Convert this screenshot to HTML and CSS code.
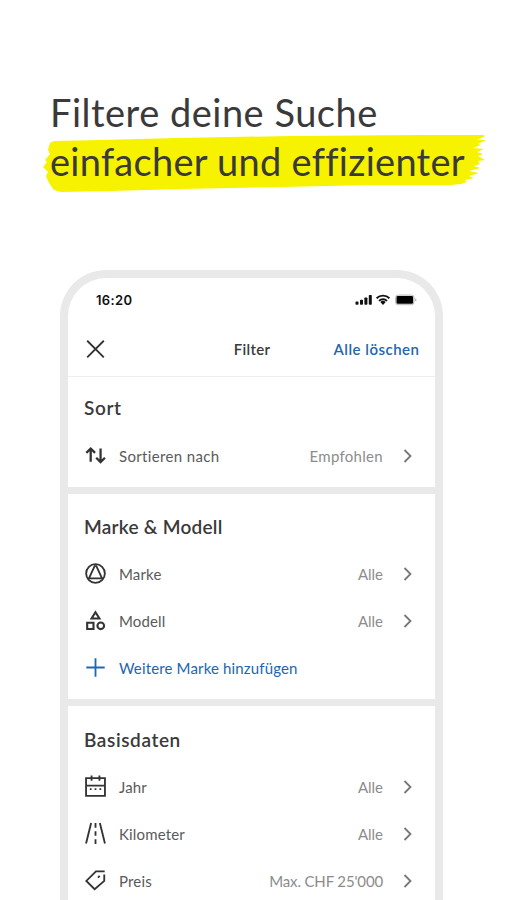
FILE: index.html
```html
<!DOCTYPE html>
<html lang="de">
<head>
<meta charset="utf-8">
<title>Filter</title>
<link rel="stylesheet" href="styles.css">
</head>
<body>
<h1 class="headline">
  <span class="line first">Filtere deine Suche</span>
  <span class="line second">
    <svg class="brush" width="447" height="60" viewBox="0 0 447 60"><path fill="#f6f200" d="M9 9 13 7 60 6 135 4 250 2 382 1 442 1 444 2 436 6 445 6 437 10 440 11 432 14 443 15 436 18 442 20 437 22 444 26 437 27 439 30 433 32 439 34 428 37 438 39 428 42 433 44 424 46 426 48 420 50 410 51 330 51 240 53 140 55 70 57 20 58 13 56 10 52 7 47 5 42 7 38 2 33 6 28 4 26 9 20 7 16Z"/></svg>
    <span class="label">einfacher und effizienter</span>
  </span>
</h1>
<main class="phone">
  <div class="status">
    <span class="time">16:20</span>
    <svg width="62" height="12" viewBox="0 0 62 12">
      <g fill="#111"><rect x="0.500" y="7.600" width="3" height="3.200" rx=".8"/><rect x="5" y="5.800" width="3" height="5" rx=".8"/><rect x="9.400" y="3.400" width="3" height="7.400" rx=".8"/><rect x="13.800" y="1" width="3" height="9.800" rx=".8"/><path d="m25.300 8.100 2.700 2.800 2.700-2.800a4 4 0 0 0-5.400 0Z"/></g>
      <path fill="none" stroke="#111" stroke-width="1.900" d="M21.600 4.200a9.300 9.300 0 0 1 12.800 0M24 6.900a5.800 5.800 0 0 1 8 0"/>
      <rect x="40.600" y="1.100" width="18.400" height="9.600" rx="2.600" fill="#fff" stroke="#b5b5b5"/><rect x="41.500" y="2.100" width="16.600" height="7.600" rx="1.300" fill="#000"/><path fill="#aaa" d="M60.200 4.500q1.300.4 1.300 1.400t-1.300 1.400Z"/>
    </svg>
  </div>
  <header class="bar">
    <svg class="icon" viewBox="0 0 24 24"><path d="m2.500 2 19 19m0-19-19 19"/></svg>
    <strong class="title">Filter</strong>
    <a class="clear">Alle löschen</a>
  </header>
  <section class="group sort">
    <h2>Sort</h2>
    <div class="row"><svg class="icon bold" viewBox="0 0 24 24"><path d="M6.500 19V4.500M1.500 9l5-5 5 5M17.800 4v15m-5-4.500 5 5 5-5"/></svg><span class="name">Sortieren nach</span><span class="value">Empfohlen</span><svg class="chev" viewBox="0 0 10 14"><path d="m1.500 1 6 6-6 6"/></svg></div>
  </section>
  <section class="group make">
    <h2>Marke &amp; Modell</h2>
    <div class="row"><svg class="icon" viewBox="0 0 24 24"><circle cx="12" cy="12" r="10.700"/><path d="M2.500 17.500h19M4.500 17.500 11 3.500h2l6.500 14"/></svg><span class="name">Marke</span><span class="value">Alle</span><svg class="chev" viewBox="0 0 10 14"><path d="m1.500 1 6 6-6 6"/></svg></div>
    <div class="row"><svg class="icon heavy" viewBox="0 0 24 24"><path d="m12 2.500 4.500 7.200h-9ZM2.500 14.500h7.200v7.200H2.500Z"/><circle cx="18" cy="18" r="3.800"/></svg><span class="name">Modell</span><span class="value">Alle</span><svg class="chev" viewBox="0 0 10 14"><path d="m1.500 1 6 6-6 6"/></svg></div>
    <div class="row add"><svg class="icon" viewBox="0 0 24 24"><path d="M12 1.500v21M1.500 12h21"/></svg><span class="name">Weitere Marke hinzufügen</span></div>
  </section>
  <section class="group basics">
    <h2>Basisdaten</h2>
    <div class="row"><svg class="icon" viewBox="0 0 24 24"><path d="M1.200 2.500h21.600v20.300H1.200ZM1.200 11h21.600M7.500-.5v6m9-6v6"/><path d="M5.500 15h2m3.500 0h2m3.500 0h2"/></svg><span class="name">Jahr</span><span class="value">Alle</span><svg class="chev" viewBox="0 0 10 14"><path d="m1.500 1 6 6-6 6"/></svg></div>
    <div class="row"><svg class="icon" viewBox="0 0 24 24"><path d="M7 0 1.200 23.500M17 0l5.800 23.500M12 0v5.500m0 4v5m0 4v5.500"/></svg><span class="name">Kilometer</span><span class="value">Alle</span><svg class="chev" viewBox="0 0 10 14"><path d="m1.500 1 6 6-6 6"/></svg></div>
    <div class="row"><svg class="icon" viewBox="0 0 24 24"><path d="M22.500 1.500H12.500L1.500 12.500l9.500 9.500L22 12.500V5"/><path d="m14.800 8.800 2-2"/></svg><span class="name">Preis</span><span class="value price">Max. CHF 25'000</span><svg class="chev" viewBox="0 0 10 14"><path d="m1.500 1 6 6-6 6"/></svg></div>
  </section>
</main>
</body>
</html>
```
FILE: styles.css
```css
* { box-sizing: border-box; }
html, body { margin: 0; }
body { height: 900px; overflow: hidden; background: #fff; color: #3a3a3a; font-family: Lato, "Liberation Sans", sans-serif; font-variant-ligatures: none; }
.headline { margin: 0; padding: 88px 0 0 50px; height: 270px; font-weight: 400; font-size: 38px; line-height: 49px; letter-spacing: .5px; white-space: nowrap; }
.line { display: block; position: relative; }
.second { letter-spacing: .27px; }
.label { position: relative; }
.brush { position: absolute; left: -9px; top: -3px; }
.phone { width: 383px; height: 630px; margin-left: 60px; border: 8px solid #e9e9e9; border-bottom: 0; border-radius: 46px 46px 0 0; overflow: hidden; }
.status { height: 44px; padding: 0 18px 0 28px; display: flex; align-items: center; justify-content: space-between; font: 600 13px Inter, sans-serif; color: #111; }
.time { letter-spacing: .35px; }
.bar { height: 55px; padding: 0 16px 0 17px; display: grid; grid-template-columns: 1fr auto 1fr; align-items: center; border-bottom: 1px solid #eee; font-size: 15px; }
.title { font-weight: 600; letter-spacing: .3px; }
.clear { justify-self: end; color: #2166b0; font-weight: 600; letter-spacing: .5px; margin-right: -.5px; }
.icon { width: 21px; height: 21px; fill: none; stroke: #333; stroke-width: 2.1; flex: none; overflow: visible; }
.bold { stroke-width: 2.6; }
.heavy { stroke-width: 2.4; }
.group { padding-bottom: 8px; border-bottom: 7px solid #e9e9e9; }
.group h2 { margin: 0; height: 56px; padding: 9px 0 0 16px; line-height: 48px; font-size: 19px; font-weight: 600; letter-spacing: .25px; }
.sort h2 { height: 55px; padding-top: 7px; letter-spacing: .6px; }
.basics h2 { height: 57px; padding-top: 10px; letter-spacing: .6px; }
.row { height: 47px; display: flex; align-items: center; padding: 0 22px 0 17px; font-size: 15px; white-space: nowrap; }
.name { margin-left: 13px; color: #5a5a5a; letter-spacing: .15px; }
.sort .name { letter-spacing: .35px; }
.value { margin-left: auto; color: #8c8c8c; }
.sort .value { letter-spacing: .3px; }
.price { letter-spacing: -.15px; }
.chev { width: 10px; height: 14px; margin-left: 20px; fill: none; stroke: #777; stroke-width: 1.8; }
.add .name { color: #2166b0; }
.add .icon { stroke: #2166b0; }
```
